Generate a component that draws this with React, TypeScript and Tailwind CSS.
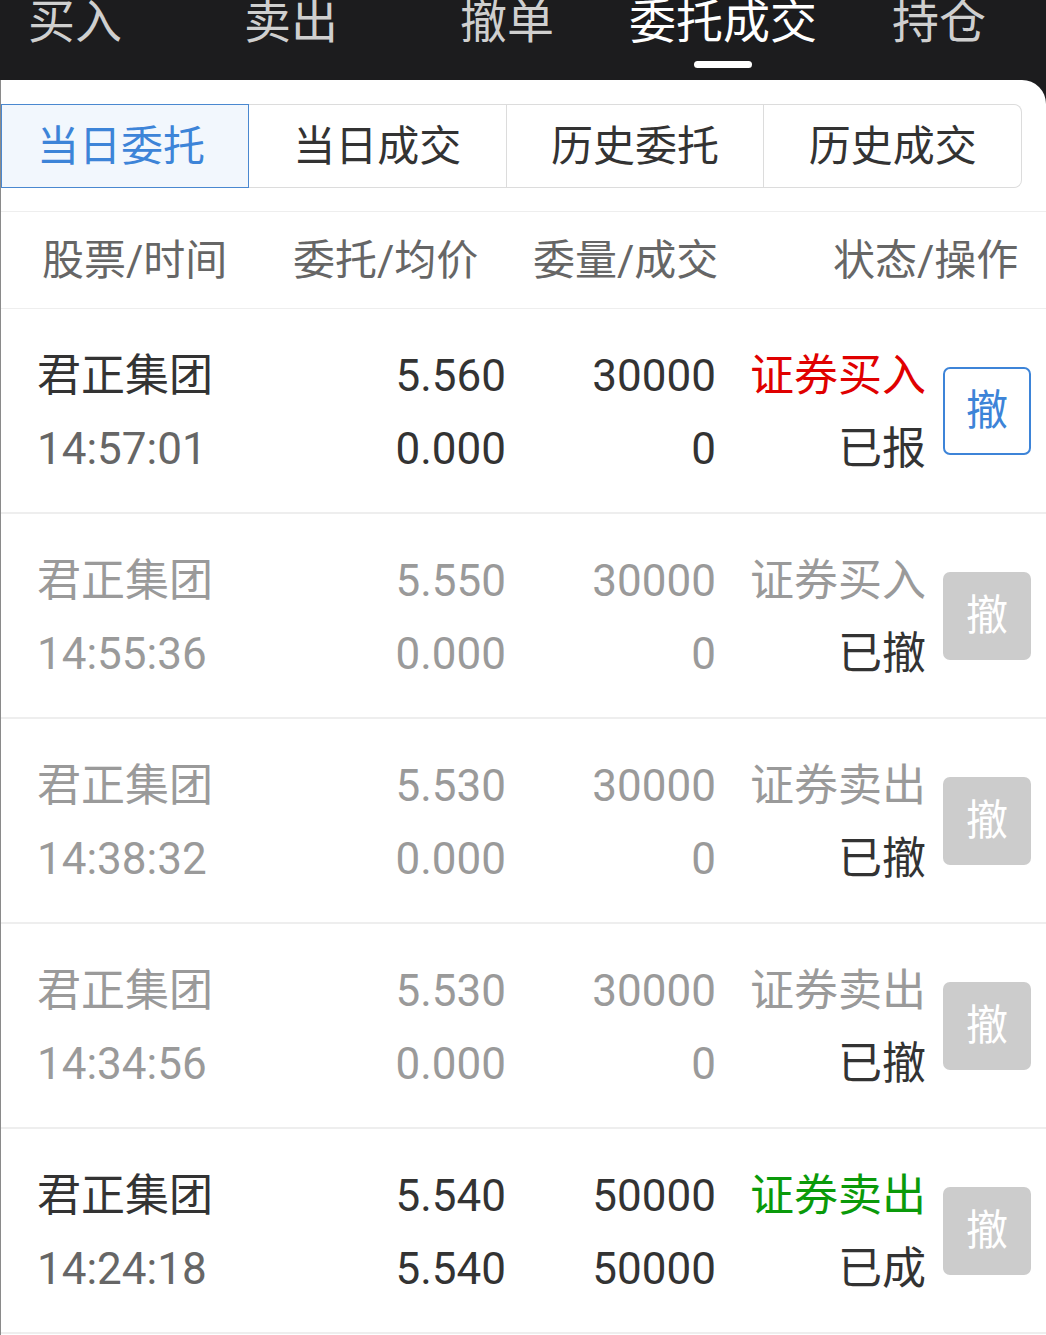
import React from "react";

const NAV = ["买入", "卖出", "撤单", "委托成交", "持仓"];
const TABS = ["当日委托", "当日成交", "历史委托", "历史成交"];

type Row = {
  name: string;
  time: string;
  price: string;
  avg: string;
  qty: string;
  done: string;
  type: string;
  status: string;
  tone: "buy" | "sell" | "muted";
  active: boolean;
};

const ROWS: Row[] = [
  { name: "君正集团", time: "14:57:01", price: "5.560", avg: "0.000", qty: "30000", done: "0", type: "证券买入", status: "已报", tone: "buy", active: true },
  { name: "君正集团", time: "14:55:36", price: "5.550", avg: "0.000", qty: "30000", done: "0", type: "证券买入", status: "已撤", tone: "muted", active: false },
  { name: "君正集团", time: "14:38:32", price: "5.530", avg: "0.000", qty: "30000", done: "0", type: "证券卖出", status: "已撤", tone: "muted", active: false },
  { name: "君正集团", time: "14:34:56", price: "5.530", avg: "0.000", qty: "30000", done: "0", type: "证券卖出", status: "已撤", tone: "muted", active: false },
  { name: "君正集团", time: "14:24:18", price: "5.540", avg: "5.540", qty: "50000", done: "50000", type: "证券卖出", status: "已成", tone: "sell", active: false },
];

function OrderRow({ row }: { row: Row }) {
  const muted = row.tone === "muted";
  const main = muted ? "text-[#9a9a9a]" : "text-[#333333]";
  const sub = muted ? "text-[#9a9a9a]" : "text-[#666666]";
  const typeColor =
    row.tone === "buy" ? "text-[#e00000]" : row.tone === "sell" ? "text-[#0a9a0a]" : "text-[#9a9a9a]";

  return (
    <div className="h-[205px] border-b-2 border-[#eeeeee] flex items-center pl-[36px] pt-[4px]">
      <div className="flex flex-col w-[262px] leading-[73px]">
        <span className={main}>{row.name}</span>
        <span className={sub}>{row.time}</span>
      </div>
      <div className={`flex flex-col items-end w-[207px] leading-[73px] ${main}`}>
        <span>{row.price}</span>
        <span>{row.avg}</span>
      </div>
      <div className={`flex flex-col items-end w-[210px] leading-[73px] ${main}`}>
        <span>{row.qty}</span>
        <span>{row.done}</span>
      </div>
      <div className="flex flex-col items-end w-[210px] leading-[73px]">
        <span className={typeColor}>{row.type}</span>
        <span className="text-[#333333]">{row.status}</span>
      </div>
      <div className="ml-[17px] -mt-[4px]">
        {row.active ? (
          <div className="w-[88px] h-[88px] rounded-[7px] border-2 border-[#3d84d8] flex items-center justify-center text-[#3d84d8] text-[42px]">
            撤
          </div>
        ) : (
          <div className="w-[88px] h-[88px] rounded-[7px] bg-[#cccccc] flex items-center justify-center text-white text-[42px]">
            撤
          </div>
        )}
      </div>
    </div>
  );
}

export default function App() {
  return (
    <div
      className="w-[1046px] h-[1335px] bg-[#1c1c1e] overflow-hidden"
      style={{ fontFamily: 'Roboto, "Noto Sans CJK SC", sans-serif' }}
    >
      {/* top nav */}
      <div className="h-[80px] flex -ml-[33px]">
        {NAV.map((item, i) => (
          <div key={item} className="w-[216px] shrink-0 flex flex-col items-center">
            <span
              className={`text-[47px] leading-[47px] -mt-[2px] ${
                i === 3 ? "text-white" : "text-[#cfcfcf]"
              }`}
            >
              {item}
            </span>
            {i === 3 && <div className="mt-[16px] w-[58px] h-[7px] rounded-full bg-white" />}
          </div>
        ))}
      </div>

      {/* panel */}
      <div className="bg-white rounded-tr-[24px] border-l border-[#8a8a8a] h-[1255px]">
        <div className="pt-[24px] pr-[24px]">
          <div className="flex h-[84px] text-[42px] text-[#333333]">
            {TABS.map((t, i) => (
              <div
                key={t}
                className={`flex items-center justify-center ${
                  i === 0
                    ? "w-[248px] pr-[8px] bg-[#f2f7fd] border border-[#4a88d0] text-[#3d84d8]"
                    : i === 3
                    ? "flex-1 border border-l-0 border-[#dcdcdc] rounded-r-[8px]"
                    : "flex-1 border border-l-0 border-[#dcdcdc]"
                }`}
              >
                {t}
              </div>
            ))}
          </div>
        </div>

        <div className="mt-[23px] h-[98px] border-t border-b border-[#eeeeee] flex items-center text-[42px] text-[#666666]">
          <span className="ml-[41px] w-[251px]">股票/时间</span>
          <span className="w-[240px]">委托/均价</span>
          <span className="w-[300px]">委量/成交</span>
          <span>状态/操作</span>
        </div>

        <div className="text-[44px]">
          {ROWS.map((r) => (
            <OrderRow key={r.time} row={r} />
          ))}
        </div>
      </div>
    </div>
  );
}
